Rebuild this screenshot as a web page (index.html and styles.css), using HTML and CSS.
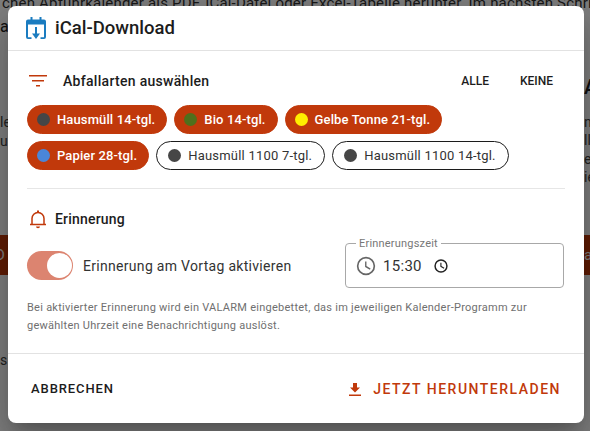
FILE: index.html
```html
<!DOCTYPE html>
<html lang="de">
<head>
<meta charset="utf-8">
<title>iCal-Download</title>
<link rel="stylesheet" href="styles.css">
</head>
<body>
<div class="page">
  <p class="page-top">chen Abfuhrkalender als PDF, iCal-Datei oder Excel-Tabelle herunter. Im nächsten Schritt</p>
  <div class="page-columns">
    <div class="page-left">
      <p class="l1">a</p>
      <p class="l2">le</p>
      <p class="l3">ur</p>
      <div class="page-btn"><span>D</span></div>
      <p class="l4">s</p>
    </div>
    <div class="page-right">
      <h2>A</h2>
      <p class="r1">n</p>
      <p>ll</p>
      <p>e</p>
      <p>ie</p>
      <div class="page-btn"><span>a</span></div>
    </div>
  </div>
</div>
<div class="scrim">
  <section class="dialog">
    <header class="dialog-head">
      <svg class="cal" viewBox="0 0 20 22" width="20" height="22"><path fill="#1b7cc0" d="M4.500 0h2v2.500h7V0h2v2.500H18a2 2 0 0 1 2 2V20a2 2 0 0 1-2 2h-3.500v-1.800H18V7.500H2v12.700h3.500V22H2a2 2 0 0 1-2-2V4.500a2 2 0 0 1 2-2h2.500z"/><path fill="#1b7cc0" d="M9 10h2v6.500h3L10 22l-4-5.500h3z"/></svg>
      <h1>iCal-Download</h1>
    </header>
    <div class="dialog-body">
      <div class="section-row">
        <svg class="filter" viewBox="0 0 18 12" width="18" height="12"><path fill="#c1390b" d="M0 0h18v1.600H0zM3 5h12v1.600H3zM7 10h4v1.600H7z"/></svg>
        <h3 class="types-title">Abfallarten auswählen</h3>
        <div class="links"><button>ALLE</button><button>KEINE</button></div>
      </div>
      <div class="chips">
        <span class="chip on"><i class="dot grey"></i>Hausmüll 14-tgl.</span>
        <span class="chip on"><i class="dot green"></i>Bio 14-tgl.</span>
        <span class="chip on"><i class="dot yellow"></i>Gelbe Tonne 21-tgl.</span>
        <span class="chip on"><i class="dot blue"></i>Papier 28-tgl.</span>
        <span class="chip"><i class="dot grey"></i>Hausmüll 1100 7-tgl.</span>
        <span class="chip"><i class="dot grey"></i>Hausmüll 1100 14-tgl.</span>
      </div>
      <hr class="rule">
      <div class="reminder-head">
        <svg class="bell" viewBox="0 0 18 20" width="18" height="20"><path fill="none" stroke="#c1390b" stroke-width="1.500" d="M1 15.500h16M3 15.500V9.500a6 6 0 0 1 12 0v6"/><path fill="#c1390b" d="M8 1.500h2v2H8zM7 17.500h4a2 1.700 0 0 1-4 0z"/></svg>
        <h3>Erinnerung</h3>
      </div>
      <div class="reminder-row">
        <label class="toggle"><span class="switch"><span class="thumb"></span></span><span>Erinnerung am Vortag aktivieren</span></label>
        <fieldset class="time">
          <legend>Erinnerungszeit</legend>
          <svg viewBox="0 0 24 24" width="22" height="22"><path fill="#666" d="M12 2a10 10 0 1 0 0 20 10 10 0 0 0 0-20zm0 18.200a8.200 8.200 0 1 1 0-16.400 8.200 8.200 0 0 1 0 16.400zM12.500 7H11v6l5.200 3.100.8-1.300-4.500-2.700z"/></svg>
          <span class="clock-value">15:30</span>
          <svg viewBox="0 0 24 24" width="16" height="16"><path fill="#222" d="M12 2a10 10 0 1 0 0 20 10 10 0 0 0 0-20zm0 17.800a7.800 7.800 0 1 1 0-15.600 7.800 7.800 0 0 1 0 15.600zM12.700 7H11v6l5.200 3.100.9-1.400-4.400-2.600z"/></svg>
        </fieldset>
      </div>
      <p class="hint">Bei aktivierter Erinnerung wird ein VALARM eingebettet, das im jeweiligen Kalender-Programm zur gewählten Uhrzeit eine Benachrichtigung auslöst.</p>
    </div>
    <footer class="dialog-foot">
      <button class="cancel">ABBRECHEN</button>
      <button class="download"><svg viewBox="0 0 14 16" width="14" height="16"><path fill="#c1390b" d="M5 2h4v4.500h3L7 11.500l-5-5h3zM1 13.500h12V15H1z"/></svg>JETZT HERUNTERLADEN</button>
    </footer>
  </section>
</div>
</body>
</html>
```
FILE: styles.css
```css
* { box-sizing: border-box; }
html, body { margin: 0; height: 100%; }
body { width: 590px; height: 431px; overflow: hidden; position: relative; font-family: Roboto, "Liberation Sans", sans-serif; color: #1c1c1c; background: #fff; }
p, h1, h2, h3 { margin: 0; }
button { font: inherit; background: none; border: 0; padding: 0; color: inherit; }

.page { height: 431px; overflow: hidden; font-size: 16px; color: #333; }
.page-top { margin-top: -6px; padding-left: 2px; white-space: nowrap; line-height: 19px; font-size: 15px; letter-spacing: .2px; }
.page-columns { display: flex; justify-content: space-between; }
.page-left { width: 30px; font-size: 14px; color: #444; }
.page-left .l1 { margin-top: 4px; font-size: 16px; color: #222; line-height: 20px; }
.page-left .l2 { margin-top: 75.500px; line-height: 19px; }
.page-left .l3 { line-height: 19px; }
.page-left .l4 { margin-top: 76px; line-height: 18px; }
.page-btn { height: 40px; background: #c1390b; color: #fff; line-height: 40px; font-size: 15px; }
.page-left .page-btn { margin-top: 84.500px; text-indent: -5px; }
.page-right { width: 6px; white-space: nowrap; font-size: 14px; color: #444; }
.page-right h2 { margin-top: 59px; font-size: 20px; line-height: 30px; font-weight: 500; color: #222; }
.page-right .r1 { margin-top: 10.500px; }
.page-right p { line-height: 18.500px; }
.page-right .page-btn { margin-top: 48.500px; }

.scrim { position: absolute; inset: 0; background: rgba(0, 0, 0, .5); }
.dialog { position: absolute; left: 8px; top: 6px; width: 576px; height: 417px; background: #fff; border-radius: 8px; display: flex; flex-direction: column; box-shadow: 0 11px 15px -7px rgba(0,0,0,.2), 0 24px 38px 3px rgba(0,0,0,.14), 0 9px 46px 8px rgba(0,0,0,.12); }

.dialog-head { height: 45px; flex: none; display: flex; align-items: center; gap: 9px; padding-left: 18px; border-bottom: 1px solid #e2e2e2; }
.dialog-head h1 { font-size: 18.500px; font-weight: 500; line-height: 24px; }

.dialog-body { flex: 1; padding: 0 19px; }
.section-row { height: 24px; margin-top: 18px; display: flex; align-items: center; }
.filter { margin-left: 2px; }
.types-title { margin-left: 16px; font-size: 14px; font-weight: 500; letter-spacing: .3px; }
.links { margin-left: auto; display: flex; gap: 31px; padding-right: 12px; font-size: 12px; font-weight: 500; letter-spacing: 1.500px; }

.chips { display: flex; flex-wrap: wrap; gap: 7px; margin-top: 12px; width: 500px; }
.chip { height: 29px; display: inline-flex; align-items: center; border: 1px solid #1c1c1c; border-radius: 15px; padding: 0 12px 0 11px; font-size: 13px; letter-spacing: .21px; white-space: nowrap; background: #fff; color: #333; }
.chip.on { background: #c1390b; border-color: #c1390b; color: #fff; font-weight: 500; letter-spacing: .12px; padding: 0 11px 0 9px; }
.dot { width: 13px; height: 13px; border-radius: 50%; margin-right: 7px; flex: none; }
.dot.grey { background: #464646; }
.dot.green { background: #4f6f1c; }
.dot.yellow { background: #ffee00; }
.dot.blue { background: #4a86d8; }

.rule { margin: 18px 0 0; height: 1px; border: 0; background: #e6e6e6; }

.reminder-head { display: flex; align-items: center; height: 20px; margin-top: 20px; gap: 8px; }
.bell { margin-left: 2px; }
.reminder-head h3 { font-size: 14px; font-weight: 500; letter-spacing: .2px; }

.reminder-row { display: flex; justify-content: space-between; align-items: flex-start; margin-top: 9px; height: 50px; }
.toggle { display: flex; align-items: center; gap: 10px; margin-top: 13px; font-size: 14px; letter-spacing: .3px; color: #333; }
.switch { width: 46px; height: 29px; border-radius: 15px; background: #dc8470; display: flex; align-items: center; justify-content: flex-end; padding-right: 1px; }
.thumb { width: 25px; height: 25px; border-radius: 50%; background: #fff; }
.time { width: 219px; height: 50px; margin: 0 1px 0 0; padding: 0 0 4px 9px; border: 1px solid #a8a8a8; border-radius: 4px; display: flex; align-items: center; font-size: 15px; color: #333; }
.time legend { padding: 0 3px; margin-left: 1px; font-size: 11px; line-height: 11px; color: #777; letter-spacing: .2px; }
.clock-value { margin: 0 11px 0 6px; letter-spacing: .3px; }

.hint { margin-top: 11px; width: 515px; font-size: 11px; line-height: 18px; color: #6f6f6f; letter-spacing: .26px; }

.dialog-foot { height: 70px; flex: none; border-top: 1px solid #e2e2e2; display: flex; justify-content: space-between; align-items: center; padding: 0 23px 0 23px; }
.cancel { font-size: 13px; font-weight: 500; letter-spacing: .9px; color: #1c1c1c; }
.download { display: flex; align-items: center; gap: 11px; font-size: 14px; font-weight: 500; letter-spacing: 1.500px; color: #c1390b; }
```
